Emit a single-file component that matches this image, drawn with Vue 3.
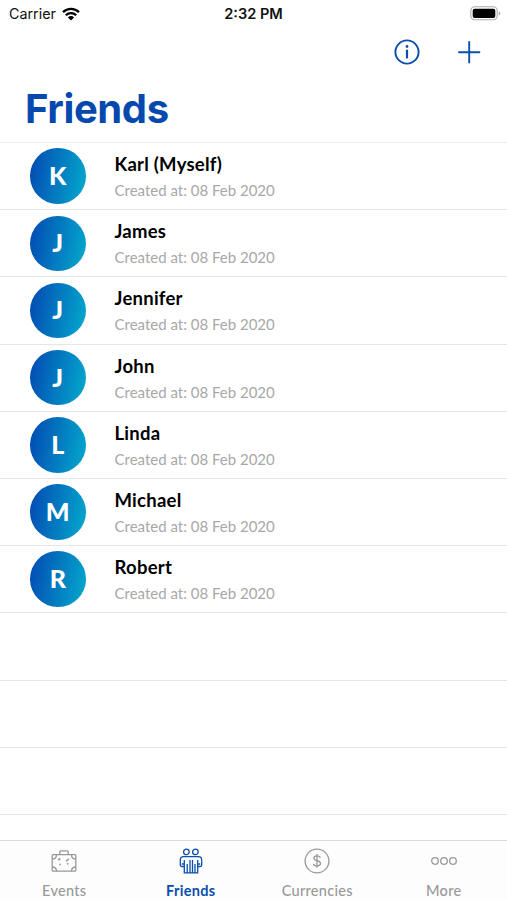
<template>
  <div class="phone">
    <header class="status-bar">
      <div class="carrier">
        <span>Carrier</span>
        <svg class="wifi" viewBox="0 0 18 14" width="18" height="14">
          <path
            d="M1 5.2a11.5 11.5 0 0 1 16 0M3.8 8.2a7.4 7.4 0 0 1 10.4 0"
            fill="none"
            stroke="#000"
            stroke-width="2.3"
          />
          <path d="M5.9 10.4a4.4 4.4 0 0 1 6.2 0L9 13.6z" fill="#000" />
        </svg>
      </div>
      <div class="time">2:32 PM</div>
      <svg class="battery" viewBox="0 0 31 15" width="31" height="15">
        <rect x="0.8" y="0.8" width="26.4" height="13" rx="4" fill="#fff" stroke="#aaa" stroke-width="1.1" />
        <rect x="2.7" y="2.8" width="22.6" height="9.2" rx="2" fill="#000" />
        <path d="M28.7 5.2q1.6.7 1.6 2.2t-1.6 2.2z" fill="#aaa" />
      </svg>
    </header>

    <nav class="nav-bar">
      <button class="icon-btn" aria-label="Info">
        <svg viewBox="0 0 26 26" width="26" height="26">
          <circle cx="13" cy="13" r="11.6" fill="none" stroke="#0a4fae" stroke-width="1.9" />
          <circle cx="13" cy="7.5" r="1.4" fill="#0a4fae" />
          <path d="M13 11.6v7" stroke="#0a4fae" stroke-width="2.2" stroke-linecap="round" />
        </svg>
      </button>
      <button class="icon-btn" aria-label="Add">
        <svg viewBox="0 0 26 26" width="26" height="26">
          <path d="M13.2 3v20.4M3 13.2h20.4" stroke="#0a4fae" stroke-width="1.9" stroke-linecap="round" />
        </svg>
      </button>
    </nav>

    <h1>Friends</h1>

    <ul class="friends">
      <li v-for="friend in friends" :key="friend.name" class="row">
        <div class="avatar">{{ friend.name[0] }}</div>
        <div class="details">
          <p class="name">{{ friend.name }}</p>
          <p class="created">Created at: {{ friend.created }}</p>
        </div>
      </li>
      <li v-for="n in 4" :key="n" class="row"></li>
    </ul>

    <footer class="tab-bar">
      <button
        v-for="tab in tabs"
        :key="tab"
        class="tab"
        :class="{ active: tab === activeTab }"
        @click="activeTab = tab"
      >
        <svg class="tab-icon" viewBox="0 0 28 28" width="28" height="28">
          <g v-if="tab === 'Events'">
            <path d="M9.8 7.7V4.8q0-1 1-1h6.4q1 0 1 1v2.9" />
            <rect x="2.2" y="7.7" width="23.6" height="16.5" rx="1" />
            <path d="M2.2 12q4.3 0 4.3-4.3M25.8 12q-4.3 0-4.3-4.3M2.2 20q4.3 0 4.3 4.2M25.8 20q-4.3 0-4.3 4.2" />
            <path d="M8.3 13l2-1.5M9.2 17.5h1.6M16 14l2-1M18.5 11.5v1.3M17 17.2l1.4-.8" stroke-width="1.6" />
          </g>
          <g v-else-if="tab === 'Friends'">
            <circle cx="9.4" cy="4.9" r="2.8" />
            <circle cx="18.4" cy="4.9" r="2.8" />
            <path d="M7.3 19.5H4.7a1.4 1.4 0 0 1-1.4-1.4V13q0-3.3 3.3-3.3h14.8q3.3 0 3.3 3.3v5.1a1.4 1.4 0 0 1-1.4 1.4h-2.6" />
            <path d="M7.3 13v12.8h13.4V13M10.2 17v8.8M13 13v12.8M15.5 13v12.8M18 17v8.8M4.8 17h2.5M20.7 17h2.5" />
          </g>
          <g v-else-if="tab === 'Currencies'">
            <circle cx="14" cy="14" r="11.9" />
            <path d="M17.3 10.8q-.3-2-3.3-2t-3.2 2.3q0 1.9 3.2 2.6 3.5.8 3.5 2.8 0 2.4-3.5 2.4t-3.5-2.2M14 7v13.8" />
          </g>
          <g v-else>
            <circle cx="5" cy="14" r="3.3" />
            <circle cx="14" cy="14" r="3.3" />
            <circle cx="23" cy="14" r="3.3" />
          </g>
        </svg>
        <span>{{ tab }}</span>
      </button>
    </footer>
  </div>
</template>

<script setup>
import { ref } from "vue";

const friends = ref([
  { name: "Karl (Myself)", created: "08 Feb 2020" },
  { name: "James", created: "08 Feb 2020" },
  { name: "Jennifer", created: "08 Feb 2020" },
  { name: "John", created: "08 Feb 2020" },
  { name: "Linda", created: "08 Feb 2020" },
  { name: "Michael", created: "08 Feb 2020" },
  { name: "Robert", created: "08 Feb 2020" },
]);

const tabs = ["Events", "Friends", "Currencies", "More"];
const activeTab = ref("Friends");
</script>

<style>
body {
  margin: 0;
  background: #fff;
}
</style>

<style scoped>
.phone {
  display: flex;
  flex-direction: column;
  height: 900px;
  overflow: hidden;
  background: #fff;
  font-family: Lato, sans-serif;
}

.status-bar {
  display: grid;
  grid-template-columns: 1fr auto 1fr;
  align-items: center;
  flex: none;
  height: 27px;
  padding: 0 6px 0 9px;
  font-family: Inter, sans-serif;
  font-size: 14.3px;
  color: #111;
}

.carrier {
  display: flex;
  align-items: center;
  gap: 6px;
}

.time {
  margin-right: 3px;
  font-weight: 600;
  font-size: 14.6px;
}

.battery {
  justify-self: end;
}

.nav-bar {
  display: flex;
  justify-content: flex-end;
  align-items: center;
  gap: 36px;
  flex: none;
  height: 49px;
  padding-right: 25px;
}

.icon-btn {
  all: unset;
  display: flex;
  cursor: pointer;
}

h1 {
  flex: none;
  height: 66px;
  margin: 0;
  padding-left: 25px;
  font-family: Inter, sans-serif;
  font-size: 40px;
  line-height: 66px;
  font-weight: 700;
  letter-spacing: -0.4px;
  color: #0549ae;
}

.friends {
  flex: 1;
  min-height: 0;
  overflow: hidden;
  margin: 0;
  padding: 0;
  list-style: none;
  border-top: 1px solid #ebebeb;
}

.row {
  box-sizing: border-box;
  display: flex;
  align-items: center;
  gap: 29px;
  height: 67.2px;
  padding-left: 30px;
  border-bottom: 1px solid #e6e6e6;
}

.avatar {
  box-sizing: border-box;
  display: flex;
  align-items: center;
  justify-content: center;
  width: 55.5px;
  height: 55.5px;
  padding-bottom: 2px;
  border-radius: 50%;
  background: linear-gradient(100deg, #0350b4 8%, #03a6cc 95%);
  color: #fff;
  font-size: 25px;
  font-weight: 900;
}

.details {
  padding-top: 2px;
}

.details p {
  margin: 0;
}

.name {
  font-size: 18.5px;
  line-height: 26px;
  font-weight: 700;
  letter-spacing: 0.25px;
  color: #000;
}

.created {
  font-size: 15px;
  line-height: 26px;
  color: #a8a8a8;
}

.tab-bar {
  box-sizing: border-box;
  display: grid;
  grid-template-columns: repeat(4, 1fr);
  flex: none;
  height: 60px;
  padding-left: 1px;
  border-top: 1px solid #dcdcdc;
  background: #fdfdfd;
}

.tab {
  all: unset;
  display: flex;
  flex-direction: column;
  align-items: center;
  gap: 6px;
  padding-top: 6px;
  font-size: 14.5px;
  line-height: 20px;
  font-weight: 500;
  letter-spacing: 0.3px;
  color: #999;
  cursor: pointer;
}

.tab-icon {
  fill: none;
  stroke: currentColor;
  stroke-width: 1.3;
}

.tab.active {
  color: #0a4fae;
  font-weight: 700;
}
</style>
